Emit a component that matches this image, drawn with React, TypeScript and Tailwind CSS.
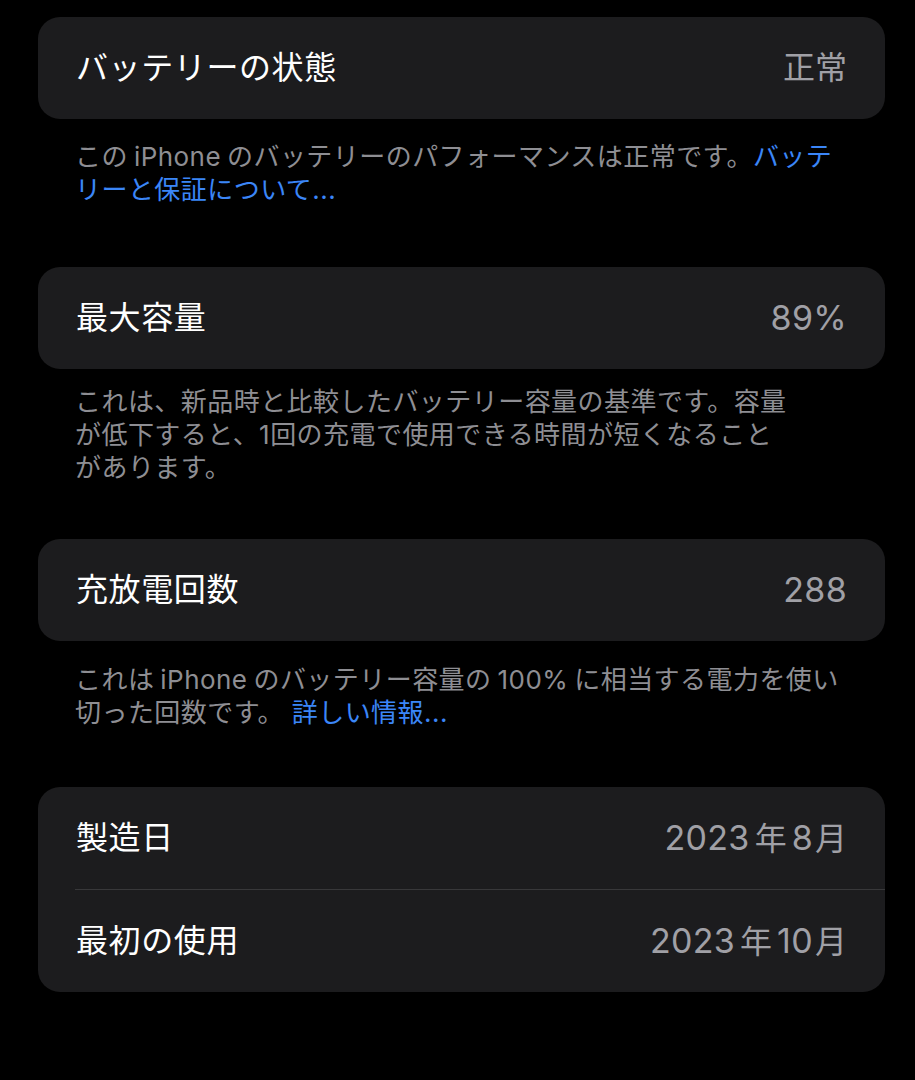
const font = "font-['Inter','Noto_Sans_CJK_JP',sans-serif]"

interface RowProps {
    label: string
    value: React.ReactNode
}

function Row({ label, value }: RowProps) {
    return (
        <div className="flex h-[102px] items-center justify-between pl-[38px] pr-[38px]">
            <span className="text-[32px] leading-none tracking-[0.6px] text-white">{label}</span>
            <span className="flex items-baseline text-[32px] leading-none text-[#a0a0a6]">{value}</span>
        </div>
    )
}

function Caption({ className, children }: { className: string; children: React.ReactNode }) {
    return (
        <p className={`pl-[37px] text-[26px] leading-[33px] tracking-[0.45px] text-[#8e8e93] ${className}`}>
            {children}
        </p>
    )
}

// latin run inside japanese text gets a little air on both sides, like iOS does
function L({ children }: { children: React.ReactNode }) {
    return <span className="mx-[6px]">{children}</span>
}

function Num({ children }: { children: React.ReactNode }) {
    return <span className="text-[34px] tracking-[0.3px]">{children}</span>
}

const link = 'text-[#3b86f7]'

export default function App() {
    return (
        <div className={`min-h-[1080px] w-[915px] bg-black pt-[17px] pb-10 pl-[38px] pr-[30px] ${font}`}>
            <section className="rounded-[22px] bg-[#1c1c1e]">
                <Row label="バッテリーの状態" value="正常" />
            </section>
            <Caption className="pt-[21px] pb-[61px]">
                この<L>iPhone</L>のバッテリーのパフォーマンスは正常です。<span className={link}>バッテ</span>
                <br />
                <span className={link}>リーと保証について...</span>
            </Caption>

            <section className="rounded-[22px] bg-[#1c1c1e]">
                <Row label="最大容量" value={<Num>89%</Num>} />
            </section>
            <Caption className="pt-[16px] pb-[55px]">
                これは、新品時と比較したバッテリー容量の基準です。容量
                <br />
                が低下すると、1回の充電で使用できる時間が短くなること
                <br />
                があります。
            </Caption>

            <section className="rounded-[22px] bg-[#1c1c1e]">
                <Row label="充放電回数" value={<Num>288</Num>} />
            </section>
            <Caption className="pt-[22px] pb-[58px]">
                これは<L>iPhone</L>のバッテリー容量の<L>100%</L>に相当する電力を使い
                <br />
                切った回数です。 <span className={link}>詳しい情報...</span>
            </Caption>

            <section className="rounded-[22px] bg-[#1c1c1e]">
                <Row
                    label="製造日"
                    value={
                        <>
                            <Num>2023</Num>
                            <span className="mx-[5px]">年</span>
                            <Num>8</Num>
                            <span className="ml-[2px]">月</span>
                        </>
                    }
                />
                <div className="ml-[37px] h-px bg-[#38383a]" />
                <Row
                    label="最初の使用"
                    value={
                        <>
                            <Num>2023</Num>
                            <span className="mx-[5px]">年</span>
                            <Num>10</Num>
                            <span className="ml-[2px]">月</span>
                        </>
                    }
                />
            </section>
        </div>
    )
}
